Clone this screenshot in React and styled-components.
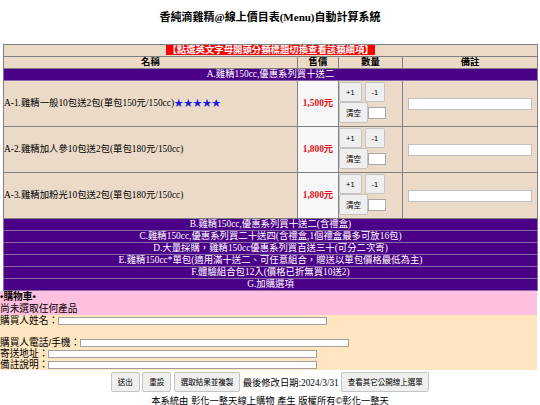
import React from "react";
import styled, { createGlobalStyle } from "styled-components";

const GlobalStyle = createGlobalStyle`
  body {
    margin: 0;
    background: #ffffff;
    color: #000000;
    font-family: "Liberation Serif", "Noto Sans CJK TC", serif;
  }
`;

const serif = `"Liberation Serif", "Noto Sans CJK TC", serif`;
const sans = `"Liberation Sans", "Noto Sans CJK TC", sans-serif`;

const Page = styled.div`
  width: 540px;
  padding-top: 10px;
`;

const Title = styled.h1`
  margin: 0 0 20px;
  text-align: center;
  font-family: ${serif};
  font-size: 11px;
  line-height: 14px;
  font-weight: bold;
`;

const Table = styled.table`
  margin-left: 3px;
  width: 534px;
  table-layout: fixed;
  border-collapse: collapse;
  border: 1px solid #808080;
  font-family: ${serif};
  font-size: 9.4px;
`;

const Cell = styled.td`
  border: 1px solid #808080;
  padding: 0;
  line-height: 11px;
  background: ${(p) => p.$bg || "#ebdac7"};
  text-align: ${(p) => p.$align || "left"};
  vertical-align: middle;
`;

const HeadCell = styled.th`
  border: 1px solid #808080;
  padding: 0;
  line-height: 11px;
  background: #ebdac7;
  font-weight: bold;
  text-align: center;
`;

const Notice = styled.span`
  background: #ff0000;
  color: #ffffff;
  font-weight: bold;
  padding: 0 1px;
`;

const CategoryCell = styled.td`
  border: 1px solid #8a6aa8;
  padding: 0;
  line-height: 11px;
  background: #4b0088;
  color: #ffffff;
  text-align: center;
  cursor: pointer;
`;

const ItemRow = styled.tr`
  height: 46px;
`;

const Stars = styled.span`
  color: #1a1ae6;
`;

const Price = styled.span`
  color: #e01020;
  font-weight: bold;
`;

const QtyCell = styled.td`
  border: 1px solid #808080;
  padding: 1px 0 0 0;
  background: #ebdac7;
  vertical-align: top;
`;

const QtyLine = styled.div`
  display: flex;
  align-items: center;
  gap: ${(p) => p.$gap || 0}px;
`;

const SmallButton = styled.button`
  box-sizing: border-box;
  height: ${(p) => p.$h || 20}px;
  min-width: ${(p) => p.$w || 0}px;
  padding: 0 ${(p) => p.$px || 6}px;
  margin: 0;
  font-family: ${sans};
  font-size: 7.5px;
  color: #000000;
  background: #efefef;
  border: 1px solid #c4c4c4;
  border-radius: 2px;
  white-space: nowrap;
`;

const QtyInput = styled.input`
  box-sizing: border-box;
  width: 18px;
  height: 12px;
  margin: 0;
  padding: 0;
  border: 1px solid #a8a8a8;
  background: #ffffff;
`;

const RemarkCell = styled(Cell)`
  padding-left: 5px;
`;

const RemarkInput = styled.input`
  display: block;
  box-sizing: border-box;
  width: 124px;
  height: 12px;
  margin: 0;
  padding: 0;
  border: 1px solid #c0c0c0;
  background: #ffffff;
`;

const Cart = styled.div`
  width: 537px;
  background: #ffc0e0;
  font-family: ${sans};
  font-size: 9.7px;
  line-height: 12px;
`;

const CartTitle = styled.div`
  font-weight: bold;
`;

const OrderForm = styled.div`
  width: 537px;
  background: #ffe6c0;
  font-family: ${sans};
  font-size: 9.7px;
  line-height: 11px;
`;

const FieldLine = styled.div`
  display: flex;
  align-items: center;
  height: 11px;
`;

const FieldInput = styled.input`
  box-sizing: border-box;
  width: 269px;
  height: 8px;
  margin: 0;
  padding: 0;
  border: 1px solid #a0a0a0;
  background: #ffffff;
`;

const Actions = styled.div`
  display: flex;
  justify-content: center;
  align-items: center;
  gap: 2.5px;
  height: 21px;
  padding-top: 1px;
  font-family: ${serif};
  font-size: 9.3px;
`;

const Footer = styled.div`
  margin-top: 3px;
  text-align: center;
  font-family: ${sans};
  font-size: 9.3px;
  line-height: 12px;
`;

const items = [
  { name: "A-1.雞精一般10包送2包(單包150元/150cc)", stars: true, price: "1,500元" },
  { name: "A-2.雞精加人參10包送2包(單包180元/150cc)", price: "1,800元" },
  { name: "A-3.雞精加粉光10包送2包(單包180元/150cc)", price: "1,800元" },
];

const categories = [
  "B.雞精150cc,優惠系列買十送二(含禮盒)",
  "C.雞精150cc,優惠系列買二十送四(含禮盒,1個禮盒最多可放16包)",
  "D.大量採購，雞精150cc優惠系列買百送三十(可分二次寄)",
  "E.雞精150cc*單包(適用滿十送二、可任意組合，贈送以單包價格最低為主)",
  "F.體驗組合包12入(價格已折無買10送2)",
  "G.加購選項",
];

const fields = [
  "購買人姓名：",
  null,
  "購買人電話/手機：",
  "寄送地址：",
  "備註說明：",
];

export default function App() {
  return (
    <Page>
      <GlobalStyle />
      <Title>香純滴雞精@線上價目表(Menu)自動計算系統</Title>
      <Table>
        <colgroup>
          <col style={{ width: 294 }} />
          <col style={{ width: 41 }} />
          <col style={{ width: 64 }} />
          <col style={{ width: 135 }} />
        </colgroup>
        <tbody>
          <tr>
            <Cell colSpan={4} $align="center">
              <Notice>【點選英文字母開頭分類標題切換查看該類細項】</Notice>
            </Cell>
          </tr>
          <tr>
            <HeadCell>名稱</HeadCell>
            <HeadCell>售價</HeadCell>
            <HeadCell>數量</HeadCell>
            <HeadCell>備註</HeadCell>
          </tr>
          <tr>
            <CategoryCell colSpan={4}>A.雞精150cc,優惠系列買十送二</CategoryCell>
          </tr>
          {items.map((item) => (
            <ItemRow key={item.name}>
              <Cell>
                {item.name}
                {item.stars && <Stars>★★★★★</Stars>}
              </Cell>
              <Cell $bg="#f7f7f7" $align="center">
                <Price>{item.price}</Price>
              </Cell>
              <QtyCell>
                <QtyLine $gap={3}>
                  <SmallButton $w={22}>+1</SmallButton>
                  <SmallButton $w={19}>-1</SmallButton>
                </QtyLine>
                <QtyLine>
                  <SmallButton $h={21} $w={29}>清空</SmallButton>
                  <QtyInput type="text" />
                </QtyLine>
              </QtyCell>
              <RemarkCell>
                <RemarkInput type="text" />
              </RemarkCell>
            </ItemRow>
          ))}
          {categories.map((c) => (
            <tr key={c}>
              <CategoryCell colSpan={4}>{c}</CategoryCell>
            </tr>
          ))}
        </tbody>
      </Table>
      <Cart>
        <CartTitle>•購物車•</CartTitle>
        <div>尚未選取任何產品</div>
      </Cart>
      <OrderForm>
        {fields.map((label, i) => (
          <FieldLine key={i}>
            {label && (
              <>
                {label}
                <FieldInput type="text" />
              </>
            )}
          </FieldLine>
        ))}
      </OrderForm>
      <Actions>
        <SmallButton $px={6}>送出</SmallButton>
        <SmallButton $px={6}>重設</SmallButton>
        <SmallButton $px={6}>選取結果並複製</SmallButton>
        <span>最後修改日期:2024/3/31</span>
        <SmallButton $px={5.5}>查看其它公開線上選單</SmallButton>
      </Actions>
      <Footer>本系統由 彰化一整天線上購物 產生 版權所有©彰化一整天</Footer>
    </Page>
  );
}
